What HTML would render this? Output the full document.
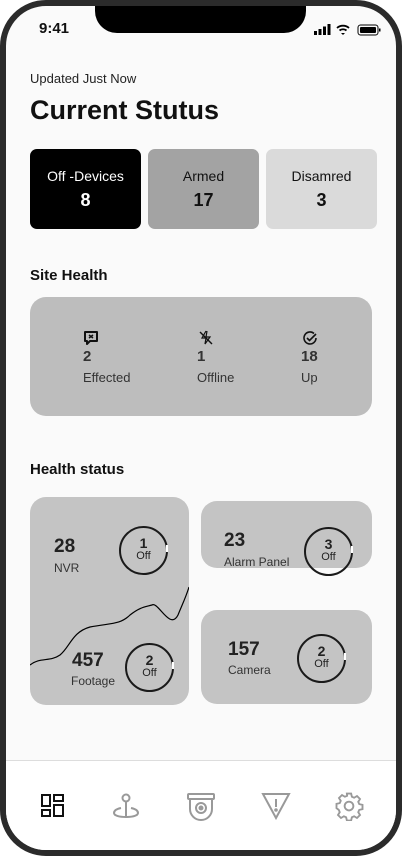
<!DOCTYPE html>
<html><head><meta charset="utf-8"><style>
*{margin:0;padding:0;box-sizing:border-box}
body{width:402px;height:856px;background:#fff;font-family:"Liberation Sans",sans-serif;position:relative;overflow:hidden;color:#111}
.frame{position:absolute;left:0;top:0;width:402px;height:856px;border:6px solid #2b2b2b;border-radius:46px;background:#fafafa;overflow:hidden}
.a{position:absolute}
.notch{left:89px;top:-6px;width:211px;height:33px;background:#000;border-radius:0 0 22px 22px}
.card{position:absolute;border-radius:7px;text-align:center}
.card .l{font-size:14px;margin-top:19px}
.card .n{font-size:18px;font-weight:bold;margin-top:6px}
.hi{position:absolute;font-size:13px;color:#333}
.hi b{display:block;font-size:15px;margin:3px 0 5px}
.g{position:absolute;background:#c4c4c4;border-radius:16px}
.ring{position:absolute;width:49px;height:49px;border:2px solid #1a1a1a;border-radius:50%;text-align:center;font-size:11px;color:#222;line-height:13px;padding-top:9px}
.ring b{display:block;font-size:14px}
.ring:after{content:"";position:absolute;right:-2px;top:17px;width:2px;height:7px;background:#fff}
.num{position:absolute;font-size:19px;font-weight:bold;color:#222}
.lab{position:absolute;font-size:12px;color:#333}
</style></head><body>
<div class="frame">
<div class="a notch"></div>
<div class="a" style="left:33px;top:14px;font-size:15px;font-weight:bold">9:41</div>
<svg class="a" style="left:308px;top:17px" width="75" height="14" viewBox="0 0 75 14">
<rect x="0" y="8" width="3" height="4" fill="#000"/><rect x="4.5" y="6" width="3" height="6" fill="#000"/><rect x="9" y="3.5" width="3" height="8.5" fill="#000"/><rect x="13.5" y="1" width="3" height="11" fill="#000"/>
<path d="M23 5a9 9 0 0 1 12 0M25.5 7.5a5.5 5.5 0 0 1 7 0" stroke="#000" stroke-width="1.8" fill="none"/><path d="M27 10l2 2 2-2z" fill="#000"/>
<rect x="44" y="2" width="20" height="10" rx="2.5" fill="none" stroke="#000"/><rect x="46" y="4" width="16" height="6" rx="1" fill="#000"/><rect x="65" y="5.5" width="1.5" height="3" fill="#000"/>
</svg>
<div class="a" style="left:24px;top:65px;font-size:13px;color:#222">Updated Just Now</div>
<div class="a" style="left:24px;top:89px;font-size:27px;font-weight:bold">Current Stutus</div>
<div class="card" style="left:24px;top:143px;width:111px;height:80px;background:#000;color:#fff"><div class="l">Off -Devices</div><div class="n">8</div></div>
<div class="card" style="left:142px;top:143px;width:111px;height:80px;background:#a3a3a3"><div class="l">Armed</div><div class="n">17</div></div>
<div class="card" style="left:260px;top:143px;width:111px;height:80px;background:#dadada"><div class="l">Disamred</div><div class="n">3</div></div>
<div class="a" style="left:24px;top:261px;font-size:15px;font-weight:bold">Site Health</div>
<div class="a" style="left:24px;top:291px;width:342px;height:119px;background:#bdbdbd;border-radius:16px"></div>
<svg class="a" style="left:77px;top:324px" width="16" height="16" viewBox="0 0 16 16"><path d="M2 2h12v9H7l-3 3v-3H2z" fill="none" stroke="#111" stroke-width="2" stroke-linejoin="round"/><path d="M6 5l4 3M10 5l-4 3" stroke="#111" stroke-width="1.5"/></svg>
<svg class="a" style="left:192px;top:324px" width="16" height="16" viewBox="0 0 16 16"><path d="M8 1L4 8h4l-1 6 5-7H8l1-6" fill="none" stroke="#111" stroke-width="1.2"/><path d="M2 2l12 12" stroke="#111" stroke-width="1.4"/></svg>
<svg class="a" style="left:296px;top:324px" width="16" height="16" viewBox="0 0 16 16"><path d="M14 8a6 6 0 1 1-2-4.5" fill="none" stroke="#111" stroke-width="1.6"/><path d="M5 8l2.5 2.5L14 4" fill="none" stroke="#111" stroke-width="1.6"/></svg>
<div class="hi" style="left:77px;top:339px"><b>2</b>Effected</div>
<div class="hi" style="left:191px;top:339px"><b>1</b>Offline</div>
<div class="hi" style="left:295px;top:339px"><b>18</b>Up</div>
<div class="a" style="left:24px;top:455px;font-size:15px;font-weight:bold">Health status</div>
<div class="g" style="left:24px;top:491px;width:159px;height:208px;overflow:hidden">
<svg class="a" style="left:0;top:0" width="159" height="208"><path d="M0 168C10 160 20 165 30 158C40 150 42 135 60 130C80 126 90 128 100 118C110 110 115 110 122 108C128 104 140 134 148 118C152 108 156 100 159 90" fill="none" stroke="#000" stroke-width="1.2"/></svg>
</div>
<div class="g" style="left:195px;top:495px;width:171px;height:67px"></div>
<div class="g" style="left:195px;top:604px;width:171px;height:94px"></div>
<div class="num" style="left:48px;top:530px">28</div><div class="lab" style="left:48px;top:555px">NVR</div>
<div class="ring" style="left:113px;top:520px"><b>1</b>Off</div>
<div class="num" style="left:66px;top:644px">457</div><div class="lab" style="left:65px;top:668px">Footage</div>
<div class="ring" style="left:119px;top:637px"><b>2</b>Off</div>
<div class="num" style="left:218px;top:524px">23</div><div class="lab" style="left:218px;top:549px">Alarm Panel</div>
<div class="ring" style="left:298px;top:521px"><b>3</b>Off</div>
<div class="num" style="left:222px;top:633px">157</div><div class="lab" style="left:222px;top:657px">Camera</div>
<div class="ring" style="left:291px;top:628px"><b>2</b>Off</div>
<div class="a" style="left:0;top:754px;width:402px;height:100px;background:#fff;border-top:1px solid #ddd"></div>
<svg class="a" style="left:34px;top:787px" width="26" height="26" viewBox="0 0 26 26" fill="none" stroke="#111" stroke-width="2"><rect x="2" y="2" width="8" height="11"/><rect x="14" y="2" width="9" height="6"/><rect x="2" y="17" width="8" height="6"/><rect x="14" y="12" width="9" height="11"/></svg>
<svg class="a" style="left:106px;top:786px" width="30" height="30" viewBox="0 0 30 30" fill="none" stroke="#999" stroke-width="2"><circle cx="14" cy="6" r="3.5"/><path d="M14 10v14"/><path d="M9 16C4 17 2 19 2 21c0 2.5 5 4 12 4s12-1.5 12-4c0-2-2-4-7-5"/></svg>
<svg class="a" style="left:180px;top:786px" width="30" height="30" viewBox="0 0 30 30" fill="none" stroke="#999" stroke-width="2"><rect x="2" y="2" width="26" height="5" rx="1"/><path d="M4 7v10a11 11 0 0 0 22 0V7"/><circle cx="15" cy="16" r="5"/><circle cx="15" cy="16" r="1.5" fill="#999"/></svg>
<svg class="a" style="left:255px;top:785px" width="30" height="30" viewBox="0 0 30 30" fill="none" stroke="#999" stroke-width="2"><path d="M2 3h26L15 27z"/><path d="M15 8v8"/><circle cx="15" cy="19" r="0.8" fill="#999"/></svg>
<svg class="a" style="left:328px;top:785px" width="30" height="30" viewBox="0 0 24 24" fill="none" stroke="#999" stroke-width="1.5"><circle cx="12" cy="12" r="3.5"/><path d="M10.3 2h3.4l.6 2.6 1.8.8 2.3-1.4 2.4 2.4-1.4 2.3.8 1.8 2.6.6v3.4l-2.6.6-.8 1.8 1.4 2.3-2.4 2.4-2.3-1.4-1.8.8-.6 2.6h-3.4l-.6-2.6-1.8-.8-2.3 1.4-2.4-2.4 1.4-2.3-.8-1.8L2 13.7v-3.4l2.6-.6.8-1.8L4 5.6 6.4 3.2l2.3 1.4 1.8-.8z"/></svg>
</div>
</body></html>
